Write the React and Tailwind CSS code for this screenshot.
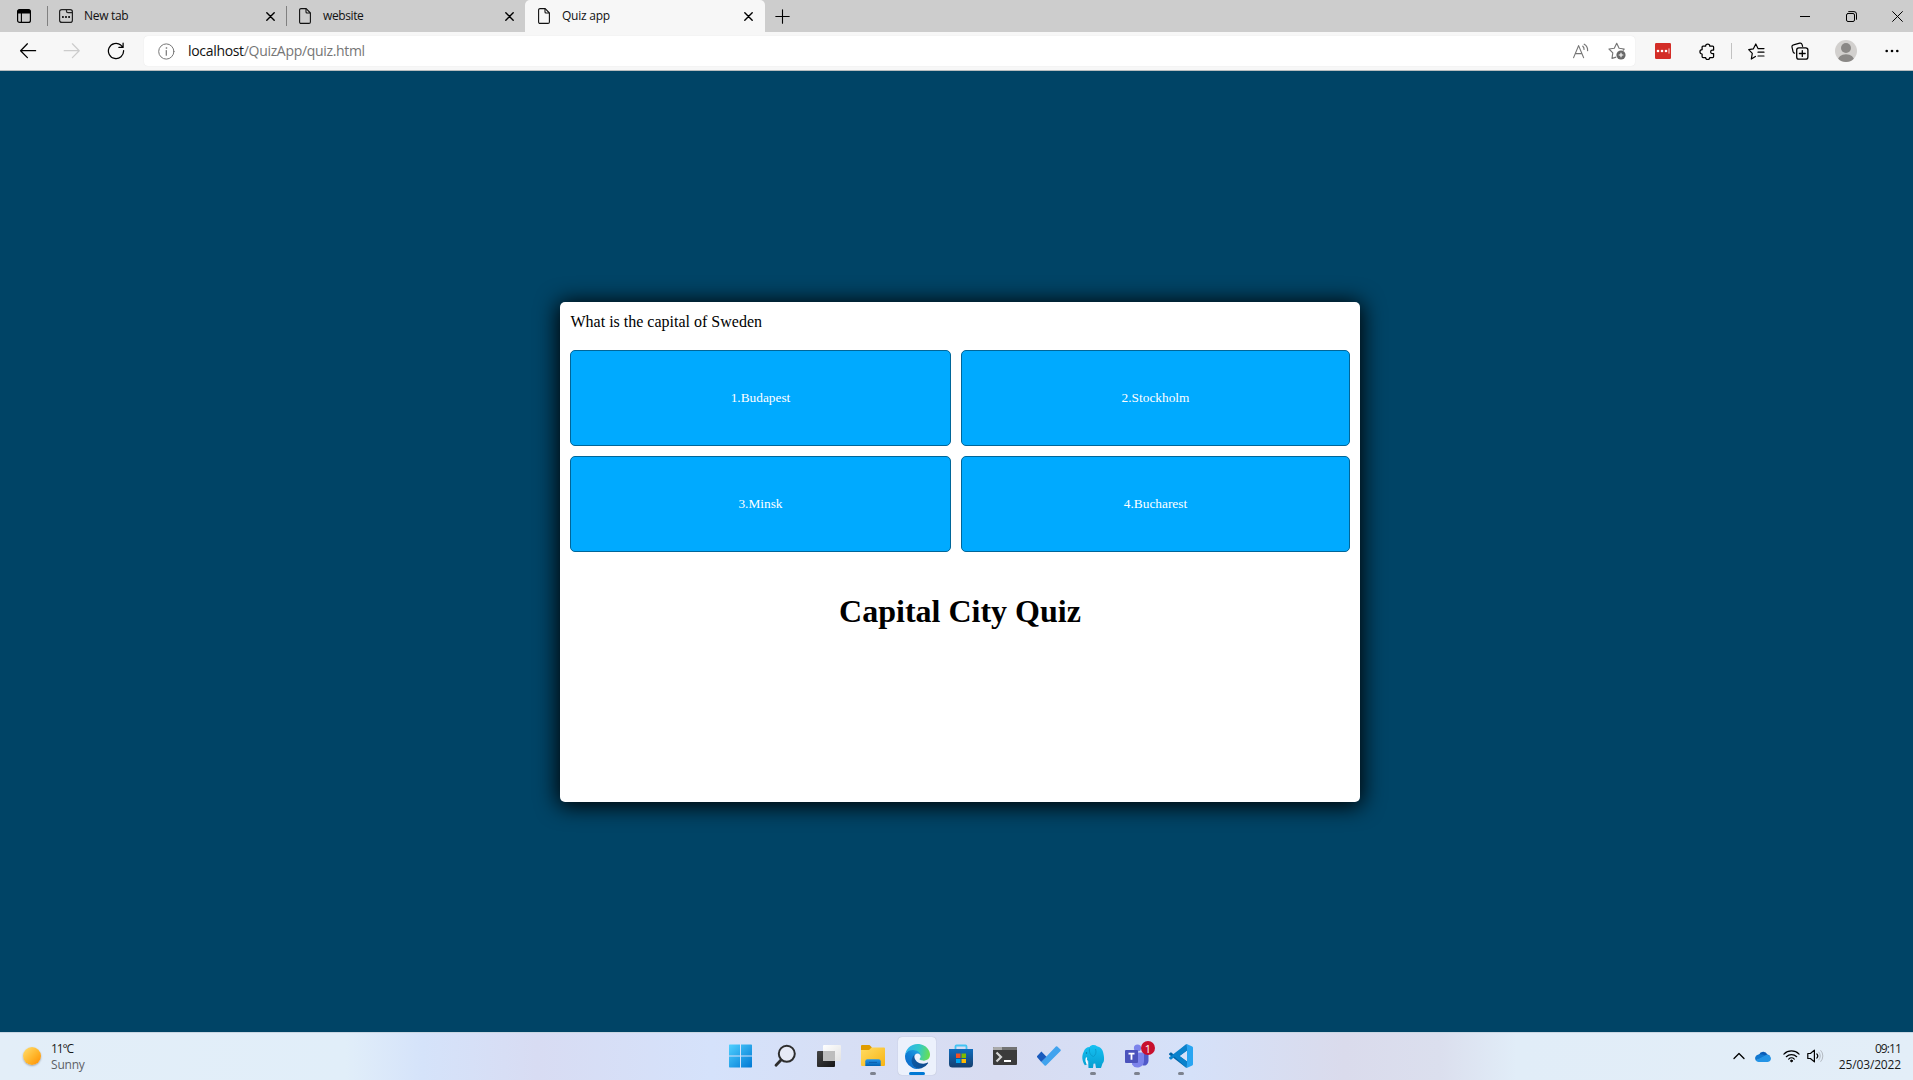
import React from "react";

const Icon = ({ size = 16, children, className = "", box = 16 }) => (
  <svg
    width={size}
    height={size}
    viewBox={`0 0 ${box} ${box}`}
    fill="none"
    stroke="currentColor"
    strokeWidth="1"
    strokeLinecap="round"
    strokeLinejoin="round"
    className={`shrink-0 ${className}`}
  >
    {children}
  </svg>
);

const CloseGlyph = () => (
  <Icon size={9} box={9}>
    <path d="M.8.8l7.4 7.4M8.2.8L.8 8.2" strokeWidth="1.4" />
  </Icon>
);

const PageIcon = () => (
  <svg width="12" height="16" viewBox="0 0 12 16" fill="none" stroke="#111" strokeWidth="1.1" strokeLinejoin="round" className="shrink-0">
    <path d="M2 .6h5.2L11.4 5v9a1.4 1.4 0 0 1-1.4 1.4H2A1.4 1.4 0 0 1 .6 14V2A1.4 1.4 0 0 1 2 .6z" />
    <path d="M7 .8V4a1 1 0 0 0 1 1h3.2" />
  </svg>
);

const NewTabIcon = () => (
  <svg width="14" height="14" viewBox="0 0 14 14" fill="none" stroke="#222" strokeWidth="1.2" className="-ml-px shrink-0">
    <rect x=".6" y=".6" width="12.8" height="12.8" rx="2.2" />
    <path d="M7.5.8v1.5a1.4 1.4 0 0 0 1.4 1.4h4.5" />
    <path d="M3 8h1.8M6.1 8h1.8M9.2 8h1.8" strokeWidth="2" />
  </svg>
);

function Tab({ icon, title, tracking, active }) {
  return (
    <div className={`flex h-8 shrink-0 items-center pr-[12px] ${active ? "w-[240px] rounded-t-[5px] bg-[#f7f7f7] pl-[13px]" : "w-[239px] pl-[12px]"}`}>
      <span className="flex w-[24px] items-center">{icon}</span>
      <span className={`flex-1 text-[12px] leading-4 text-[#111] ${tracking}`}>{title}</span>
      <CloseGlyph />
    </div>
  );
}

function TabStrip() {
  return (
    <div className="flex h-8 w-[1920px] items-center bg-[#cdcdcd] text-black">
      <div className="flex w-[47px] items-center justify-center">
        <Icon size={14} box={14}>
          <rect x=".6" y=".6" width="12.8" height="12.8" rx="2" strokeWidth="1.2" />
          <path d="M1 3V2a1 1 0 0 1 1-1h10a1 1 0 0 1 1 1v2H1z" fill="currentColor" />
          <path d="M4.4 4v9" strokeWidth="1.1" />
        </Icon>
      </div>
      <div className="h-5 w-px bg-[#808080]" />
      <div className="-mr-px w-[239px]">
        <Tab icon={<NewTabIcon />} title="New tab" tracking="tracking-[-0.3px]" />
      </div>
      <div className="h-5 w-px bg-[#808080]" />
      <div className="w-[238px]">
        <Tab icon={<PageIcon />} title="website" tracking="tracking-[-0.4px]" />
      </div>
      <Tab icon={<PageIcon />} title="Quiz app" tracking="tracking-[-0.25px]" active />
      <div className="flex w-[35px] justify-center">
        <Icon size={15} box={15}>
          <path d="M7.5.8v13.4M.8 7.5h13.4" strokeWidth="1.1" />
        </Icon>
      </div>
      <div className="flex-1" />
      <div className="flex w-[46px] justify-center">
        <svg width="10" height="1"><rect width="10" height="1" fill="#000" /></svg>
      </div>
      <div className="flex w-[46px] justify-center">
        <Icon size={11} box={11}>
          <rect x=".5" y="2.5" width="8" height="8" rx="1.5" />
          <path d="M2.7.6h5.3a2.5 2.5 0 0 1 2.5 2.5v5.2" />
        </Icon>
      </div>
      <div className="flex w-[46px] justify-center">
        <Icon size={11} box={11}>
          <path d="M.6.6l9.8 9.8M10.4.6L.6 10.4" />
        </Icon>
      </div>
    </div>
  );
}

function Toolbar() {
  return (
    <div className="flex h-[38px] w-[1913px] items-center bg-[#f7f7f7] pl-[6px] text-black">
      <div className="flex w-11 justify-center">
        <Icon size={18} box={18}>
          <path d="M16.6 8.7H1.6M8.4 1.8L1.6 8.7l6.8 6.9" strokeWidth="1.25" />
        </Icon>
      </div>
      <div className="flex w-11 justify-center text-[#cccccc]">
        <Icon size={18} box={18}>
          <path d="M1.2 8.7h15M9.4 1.8l6.8 6.9-6.8 6.9" strokeWidth="1.25" />
        </Icon>
      </div>
      <div className="flex w-11 justify-center">
        <Icon size={18} box={18}>
          <path d="M16.6 8.6A7.6 7.6 0 1 1 13.8 3.1L16 5.2M16.1 1.2v4.2h-4.2" strokeWidth="1.25" />
        </Icon>
      </div>
      <div className="ml-[6px] flex h-[30px] flex-1 items-center rounded bg-white shadow-[0_0_1px_rgba(0,0,0,0.12)]">
        <div className="flex w-11 justify-center text-[#767676]">
          <Icon size={17} box={17}>
            <circle cx="8.3" cy="8.5" r="7.6" />
            <path d="M8.3 7.6v4.6" strokeWidth="1.2" />
            <circle cx="8.3" cy="5" r=".5" fill="currentColor" strokeWidth=".5" />
          </Icon>
        </div>
        <span className="flex-1 text-[14px] leading-5 tracking-[-0.32px] text-[#767676]">
          <span className="text-[#111]">localhost</span>/QuizApp/quiz.html
        </span>
        <div className="flex w-9 justify-center text-[#767676]">
          <Icon size={17} box={17}>
            <path d="M1.6 14.6L6.6 2.6l5 12M3.4 10.6h6.4" strokeWidth="1.15" />
            <path d="M10.8 3.2c1 .9 1.4 2 1.2 3.2M12.2 1.2c2.4 1.4 3.6 3.6 3.4 6.4" strokeWidth="1.2" />
          </Icon>
        </div>
        <div className="flex w-[37px] justify-center">
          <svg width="18" height="18" viewBox="0 0 18 18" fill="none" className="shrink-0">
            <path d="M8.2 15.1L4 16.4l.8-5.5L1 7l5.3-.8L8.7 1.3l2.4 4.9 5.1.8-1.3 1.5" stroke="#767676" strokeWidth="1.15" strokeLinejoin="round" />
            <circle cx="13" cy="13" r="4.6" fill="#686868" />
            <path d="M13 10.7v4.6M10.7 13h4.6" stroke="#fff" strokeWidth="1.1" />
          </svg>
        </div>
      </div>
      <div className="ml-[6px] flex w-11 justify-center">
        <svg width="16" height="16" viewBox="0 0 16 16">
          <rect width="16" height="16" rx="1.2" fill="#d32d27" />
          <circle cx="3" cy="8" r="1.3" fill="#fff" />
          <circle cx="7" cy="8" r="1.3" fill="#fff" />
          <circle cx="11" cy="8" r="1.3" fill="#fff" />
          <path d="M14 5.4v5.2" stroke="#fff" strokeWidth=".8" />
        </svg>
      </div>
      <div className="flex w-11 justify-center">
        <Icon size={17} box={17}>
          <path d="M4 3.2h2.6a2.1 2.1 0 0 1 4.2 0h2.9a.9.9 0 0 1 .9.9v3h-1.2a1.7 1.7 0 0 0 0 3.5h1.2v3a.9.9 0 0 1-.9.9h-2.9a2.1 2.1 0 0 1-4.2 0H4a.9.9 0 0 1-.9-.9V11a2.1 2.1 0 0 1 0-4.300V4.1a.9.9 0 0 1 .9-.9z" strokeWidth="1.25" />
        </Icon>
      </div>
      <div className="mx-[2px] h-4 w-px bg-[#c2c2c2]" />
      <div className="flex w-11 justify-center">
        <Icon size={17} box={17}>
          <path d="M7.4 13.4L3.3 16l1-5.6L.7 6.6l4.7-.8L7.8 1l2.2 4.4M10 5.6h6M10 9.2h6M10 13h6" strokeWidth="1.2" />
        </Icon>
      </div>
      <div className="flex w-11 justify-center">
        <Icon size={18} box={18}>
          <path d="M3.6 11.2a2 2 0 0 1-1.5-1.4L1 5.2a2 2 0 0 1 1.5-2.4l6.2-1.6A2 2 0 0 1 11.1 2.6l.5 1.8" strokeWidth="1.2" />
          <rect x="5.7" y="5.9" width="11.2" height="11.2" rx="2.2" strokeWidth="1.3" />
          <path d="M11.3 8.6v5.8M8.4 11.5h5.8" strokeWidth="1.3" />
        </Icon>
      </div>
      <div className="flex w-[48px] justify-center">
        <svg width="22" height="22" viewBox="0 0 22 22">
          <clipPath id="avatar"><circle cx="11" cy="11" r="11" /></clipPath>
          <g clipPath="url(#avatar)">
            <rect width="22" height="22" fill="#d2d0ce" />
            <circle cx="11" cy="8" r="5" fill="#8a8886" />
            <path d="M2.5 22c0-5 3.6-7.8 8.5-7.8s8.5 2.8 8.5 7.8z" fill="#8a8886" />
          </g>
        </svg>
      </div>
      <div className="mr-[-1px] flex w-11 justify-center">
        <svg width="14" height="4" viewBox="0 0 14 4">
          <circle cx="1.7" cy="2" r="1.3" />
          <circle cx="7" cy="2" r="1.3" />
          <circle cx="12.3" cy="2" r="1.3" />
        </svg>
      </div>
    </div>
  );
}

const answers = ["1.Budapest", "2.Stockholm", "3.Minsk", "4.Bucharest"];

function QuizPage() {
  return (
    <main className="flex h-[961px] w-[1920px] items-center justify-center bg-[#004466]">
      <section className="mt-px h-[500px] w-[800px] rounded-[5px] bg-white p-[10px] font-['Liberation_Serif',serif] text-black shadow-[0_2px_22px_2px_black]">
        <p className="pl-[0.5px] text-[16px] leading-[19px]">What is the capital of Sweden</p>
        <div className="mt-[19px] grid grid-cols-[381px_389px] gap-[10px]">
          {answers.map((a) => (
            <button key={a} className="h-24 rounded-[5px] border border-[#006699] bg-[#00aaff] text-[13.333px] leading-4 text-white">
              {a}
            </button>
          ))}
        </div>
        <h1 className="mt-[41px] text-center text-[32px] font-bold leading-[37px]">Capital City Quiz</h1>
      </section>
    </main>
  );
}

const WindowsIcon = () => (
  <svg width="24" height="24" viewBox="0 0 24 24">
    <defs>
      <linearGradient id="win" x1="0" y1="0" x2="1" y2="1" gradientUnits="objectBoundingBox">
        <stop offset="0" stopColor="#4fd0ff" />
        <stop offset="1" stopColor="#0078d4" />
      </linearGradient>
    </defs>
    <path fill="url(#win)" d="M.7.5H11V11.5H0V1.2A.7.7 0 0 1 .7.5zM12 .5H22.3a.7.7 0 0 1 .7.7V11.5H12zM0 12.5H11V23.5H.7a.7.7 0 0 1-.7-.7zM12 12.5H23V22.8a.7.7 0 0 1-.7.7H12z" />
  </svg>
);

const SearchIcon = () => (
  <svg width="24" height="24" viewBox="0 0 24 24" fill="none" stroke="#2d2d2d">
    <circle cx="13.8" cy="9.8" r="8" strokeWidth="2" fill="#e6eaf6" />
    <path d="M8 16L3 21.2" strokeWidth="2.8" strokeLinecap="round" />
  </svg>
);

const TaskViewIcon = () => (
  <svg width="26" height="24" viewBox="0 0 26 24">
    <defs>
      <linearGradient id="tvd" x1="0" y1="0" x2="1" y2="1"><stop stopColor="#454545" /><stop offset="1" stopColor="#151515" /></linearGradient>
      <linearGradient id="tvl" x1="0" y1="0" x2="1" y2="1"><stop stopColor="#fff" /><stop offset="1" stopColor="#e2e2e2" /></linearGradient>
    </defs>
    <rect x="1" y="7" width="18" height="16" rx="1" fill="url(#tvd)" />
    <rect x="7" y="1" width="18" height="16" rx="1" fill="url(#tvl)" />
    <path d="M7 7h12v10H7z" fill="#bdbdbd" />
  </svg>
);

const FolderIcon = () => (
  <svg width="24" height="24" viewBox="0 0 24 24">
    <defs>
      <linearGradient id="fol" x1="0" y1="0" x2="1" y2="1"><stop stopColor="#ffdc63" /><stop offset="1" stopColor="#f8b414" /></linearGradient>
      <linearGradient id="fob" x1="0" y1="0" x2="0" y2="1"><stop stopColor="#2797ea" /><stop offset="1" stopColor="#0062b5" /></linearGradient>
    </defs>
    <path d="M0 2a1 1 0 0 1 1-1h7.5L11 3.4V8H0z" fill="#e09c00" />
    <path d="M0 6h8l2.6-2.6H23a1 1 0 0 1 1 1V21a1 1 0 0 1-1 1H1a1 1 0 0 1-1-1z" fill="url(#fol)" />
    <path d="M4.3 22v-4.8a2 2 0 0 1 2-2h11.4a2 2 0 0 1 2 2V22z" fill="url(#fob)" />
    <path d="M8 18.4h8" stroke="#0b5fae" strokeWidth="1" />
  </svg>
);

const EdgeIcon = () => (
  <svg width="25" height="25" viewBox="0 0 256 256">
    <defs>
      <linearGradient id="edA" x1="63" y1="178" x2="241" y2="178" gradientUnits="userSpaceOnUse"><stop stopColor="#0c59a4" /><stop offset="1" stopColor="#114a8b" /></linearGradient>
      <linearGradient id="edB" x1="157" y1="101" x2="46" y2="222" gradientUnits="userSpaceOnUse"><stop stopColor="#1b9de2" /><stop offset=".5" stopColor="#0f7fd6" /><stop offset="1" stopColor="#0e6fcd" /></linearGradient>
      <linearGradient id="edC" x1="20" y1="70" x2="250" y2="120" gradientUnits="userSpaceOnUse"><stop stopColor="#2fb4ea" /><stop offset=".5" stopColor="#33c9c8" /><stop offset="1" stopColor="#6ae04e" /></linearGradient>
    </defs>
    <path fill="url(#edA)" d="M231 190.5a93.7 93.7 0 0 1-10.5 4.7 101.9 101.9 0 0 1-35.9 6.4c-47.3 0-88.5-32.5-88.5-74.3a31.5 31.5 0 0 1 16.4-27.3c-42.8 1.8-53.8 46.4-53.8 72.5 0 73.9 68.1 81.4 82.8 81.4 7.9 0 19.8-2.3 27-4.6l1.3-.4a128.3 128.3 0 0 0 66.6-52.8 4 4 0 0 0-5.4-5.6z" />
    <path fill="url(#edB)" d="M105.7 241.4a79.2 79.2 0 0 1-22.7-21.3 80.7 80.7 0 0 1 29.5-120c3.2-1.5 8.5-4.1 15.6-4a32.4 32.4 0 0 1 25.7 13 31.9 31.9 0 0 1 6.3 18.7c0-.2 24.5-79.6-80-79.6-43.9 0-80 41.6-80 78.2a130.2 130.2 0 0 0 12.1 56 128 128 0 0 0 156.4 67 75.5 75.5 0 0 1-62.8-8z" />
    <path fill="url(#edC)" d="M152.3 148.9c-.9 1-3.4 2.5-3.4 5.6 0 2.6 1.7 5.2 4.8 7.3 14.3 10 41.4 8.6 41.5 8.6a59.6 59.6 0 0 0 30.3-8.3 61.4 61.4 0 0 0 30.4-52.9c.3-22.4-8-37.3-11.3-43.9C223.5 23.9 177.7 0 128 0A128 128 0 0 0 0 126.2c.5-36.5 36.8-66 80-66 3.5 0 23.5.3 42 10.1 16.3 8.6 24.9 18.9 30.8 29.2 6.2 10.7 7.3 24.1 7.3 29.5s-2.7 13.3-7.8 19.9z" />
  </svg>
);

const StoreIcon = () => (
  <svg width="24" height="24" viewBox="0 0 24 24">
    <defs><linearGradient id="sto" x1="0" y1="0" x2="0" y2="1"><stop stopColor="#0f6cbd" /><stop offset="1" stopColor="#163f6e" /></linearGradient></defs>
    <path d="M6.5 6V2.5a1 1 0 0 1 1-1h9a1 1 0 0 1 1 1V6" fill="none" stroke="#43c4f4" strokeWidth="1.8" />
    <path d="M0 5h24v15a3.5 3.5 0 0 1-3.5 3.5h-17A3.5 3.5 0 0 1 0 20z" fill="url(#sto)" />
    <path d="M7 9.5h4.5V14H7z" fill="#f25022" />
    <path d="M12.5 9.5H17V14h-4.5z" fill="#7fba00" />
    <path d="M7 15h4.5v4H7z" fill="#00a4ef" />
    <path d="M12.5 15H17v4h-4.5z" fill="#ffb900" />
  </svg>
);

const TerminalIcon = () => (
  <svg width="24" height="20" viewBox="0 0 24 20">
    <rect y="1" width="24" height="18" rx="1" fill="#3b3b3b" />
    <path d="M1 1h22a1 1 0 0 1 1 1v2H0V2a1 1 0 0 1 1-1z" fill="#737373" />
    <path d="M1 1h8v3H0V2a1 1 0 0 1 1-1z" fill="#aaa" />
    <path d="M3.5 6.5L8 11l-4.5 4.5" fill="none" stroke="#d4d4d4" strokeWidth="2.2" />
    <path d="M11 15h7" stroke="#fff" strokeWidth="2" />
  </svg>
);

const TodoIcon = () => (
  <svg width="24" height="24" viewBox="0 0 24 24">
    <path d="M18.9 2.5a1 1 0 0 1 1.4 0L23.500 5.6a1 1 0 0 1 0 1.4L9 21.400a1 1 0 0 1-1.4 0L4.2 18z" fill="#41a3ee" />
    <path d="M4.4 7.6L9.5 12.7 4.2 18 .4 13.4a1 1 0 0 1 0-1.6z" fill="#195abd" />
  </svg>
);

const ElephantIcon = () => (
  <svg width="24" height="25" viewBox="0 0 24 25">
    <defs><linearGradient id="ele" x1="0" y1="0" x2="0" y2="1"><stop stopColor="#16c1f3" /><stop offset="1" stopColor="#069ed0" /></linearGradient></defs>
    <path d="M2.600 8C3.600 4.500 6 3 8.500 3c1.500-2.300 5.500-2.600 7.500-.8C20 3 22 6 22.500 10c.9 4 .9 8-1 9.500L20 24h-5l-.8-4.500-1.700.2L12 24H7.500l-.3-7c-1.200-.8-1.800-2-2-3.500C4.200 15.500 4.600 18 5.800 20.500l-1.900.8C1 17 .5 12 2.600 8z" fill="url(#ele)" />
    <path d="M8.500 4.500C8 8 9 11.500 12.500 12.500 15 11 15.500 8 14.500 5" fill="none" stroke="#0a9ac9" strokeWidth=".9" />
    <path d="M5.600 13.500c-.8 2.600-.4 4.900 1 6.200" fill="none" stroke="#fff" strokeWidth="1.3" />
    <circle cx="5.500" cy="9" r=".7" fill="#0b6f95" />
  </svg>
);

const TeamsIcon = () => (
  <svg width="26" height="26" viewBox="0 0 26 26">
    <circle cx="13.5" cy="5" r="3.6" fill="#7b83eb" />
    <path d="M17 10h7.5v8a4.5 4.5 0 0 1-6 4.2z" fill="#5059c9" />
    <path d="M9 9.5h11V18a6.5 6.5 0 0 1-12 3.5z" fill="#7b83eb" />
    <rect x="1" y="7" width="13" height="13" rx="1" fill="#4b53bc" />
    <path d="M4.500 10.700h6M7.500 10.700v6" stroke="#fff" strokeWidth="1.800" />
  </svg>
);

const CodeIcon = () => (
  <svg width="24" height="24" viewBox="0 0 24 24">
    <path d="M17.5 0L5.6 11.2 2.4 8.6a.8.8 0 0 0-1 0L.3 9.6a.8.8 0 0 0 0 1.2L17.5 24l.5-6.5L10.5 12 18 6.5z" fill="#0065a9" />
    <path d="M17.5 24L5.6 12.8l-3.2 2.6a.8.8 0 0 1-1 0l-1.1-1a.8.8 0 0 1 0-1.2L17.5 0l.5 6.5L10.5 12l7.5 5.5z" fill="#0a82cc" />
    <path d="M17.3.2c.3-.2.7-.2 1 0l4.9 2.3c.5.2.8.7.8 1.300v16.400c0 .6-.3 1.100-.8 1.300l-4.900 2.300c-.3.200-.7.200-1 0 .4.200.7-.3.7-1V1.200c0-.7-.3-1.100-.7-1z" fill="#29a5f2" />
  </svg>
);

const apps = [
  { name: "start", icon: <WindowsIcon /> },
  { name: "search", icon: <SearchIcon /> },
  { name: "taskview", icon: <TaskViewIcon /> },
  { name: "explorer", icon: <FolderIcon />, running: true },
  { name: "edge", icon: <EdgeIcon />, active: true },
  { name: "store", icon: <StoreIcon /> },
  { name: "terminal", icon: <TerminalIcon /> },
  { name: "todo", icon: <TodoIcon /> },
  { name: "mysql", icon: <ElephantIcon />, running: true },
  { name: "teams", icon: <TeamsIcon />, running: true, badge: "1" },
  { name: "code", icon: <CodeIcon />, running: true },
];

function AppButton({ app }) {
  return (
    <div className="flex w-11 justify-center">
      <div className={`relative flex h-[38px] w-[38px] items-center justify-center rounded ${app.active ? "bg-[#ecf1fc] shadow-[0_0_1px_rgba(0,0,0,0.25)]" : ""}`}>
        {app.icon}
        {app.running && <span className="absolute bottom-0 left-4 h-[3px] w-[6px] rounded-full bg-[#7d828e]" />}
        {app.active && <span className="absolute bottom-0 left-[11px] h-[3px] w-4 rounded-full bg-[#0078d4]" />}
        {app.badge && (
          <span className="absolute right-[1px] top-[4px] flex h-[14px] w-[14px] items-center justify-center rounded-full bg-[#c8102e] text-[11px] leading-none text-white">
            {app.badge}
          </span>
        )}
      </div>
    </div>
  );
}

function Taskbar() {
  return (
    <footer className="grid h-12 w-[1920px] grid-cols-[719px_484px_1fr] bg-[linear-gradient(90deg,#e3eef8_0%,#e1eef9_18%,#d5e3fa_22%,#d8dcf3_28%,#d5e2fb_37%,#d7dff5_44%,#d8dcf1_52%,#d5e1f9_62%,#dadbec_70%,#dbdfee_75%,#e1edf8_79%,#e3eef8_100%)] shadow-[inset_0_1px_0_#c9d6e2]">
      <div className="flex items-center pl-[23px]">
        <div className="h-[18px] w-[18px] rounded-full bg-[linear-gradient(135deg,#ffe072,#ffb52a_55%,#ff8c00)] shadow-[0_1px_2px_rgba(0,0,0,0.3)]" />
        <div className="ml-[10px] pt-[2px] text-[12px] leading-4">
          <p className="tracking-[-1.1px] text-[#1a1a1a]">11°C</p>
          <p className="tracking-[-0.2px] text-[#5c6066]">Sunny</p>
        </div>
      </div>
      <div className="flex items-center">
        {apps.map((app) => (
          <AppButton key={app.name} app={app} />
        ))}
      </div>
      <div className="flex items-center justify-end pr-[19px] text-black">
        <Icon size={12} box={12} className="mr-[10px]">
          <path d="M1 8.5L6 3.5l5 5" strokeWidth="1.3" />
        </Icon>
        <svg width="16" height="11" viewBox="0 0 16 11">
          <path d="M4 3.8A4.6 4.6 0 0 1 12.4 3.4 4 4 0 0 1 15 5l-7 4-6-.5z" fill="#0a5cb8" />
          <path d="M3.4 3.6a3.7 3.7 0 0 0-2.6 5.8L10 4.6C8 3.4 5.4 3 3.4 3.6z" fill="#1278d0" />
          <path d="M.8 9.3C1.4 10.3 2.4 11 3.6 11h9a3.4 3.4 0 0 0 2.8-5.2c-.8-1.4-2.4-2.3-4-2z" fill="#2494e6" />
        </svg>
        <Icon size={17} box={17} className="ml-3">
          <path d="M.9 6.1a10.8 10.8 0 0 1 15.2 0M3.3 8.7a7.4 7.4 0 0 1 10.4 0M5.7 11.1a4 4 0 0 1 5.6 0" strokeWidth="1.2" />
          <circle cx="8.5" cy="12.9" r=".9" fill="currentColor" />
        </Icon>
        <Icon size={17} box={17} className="ml-[7px]">
          <path d="M.8 5.500h2.600l4-3.400v11.800l-4-3.400H.8z" strokeWidth="1.200" />
          <path d="M9.800 5.800a3.200 3.200 0 0 1 0 4.400" strokeWidth="1.100" />
          <path d="M11.800 4.100a5.500 5.500 0 0 1 0 7.800M13.800 2.500a8 8 0 0 1 0 11" stroke="#b4bac2" />
        </Icon>
        <div className="ml-[13px] w-[64px] pt-[2px] text-right text-[12px] leading-4 text-[#1a1a1a]">
          <p className="tracking-[-0.9px]">09:11</p>
          <p className="tracking-[-0.15px]">25/03/2022</p>
        </div>
      </div>
    </footer>
  );
}

export default function App() {
  return (
    <div className="flex h-[1080px] w-[1913px] flex-col overflow-hidden font-['Open_Sans',sans-serif]">
      <header className="w-[1920px] border-b border-[#b8bdbf]">
        <TabStrip />
        <Toolbar />
      </header>
      <QuizPage />
      <Taskbar />
    </div>
  );
}
